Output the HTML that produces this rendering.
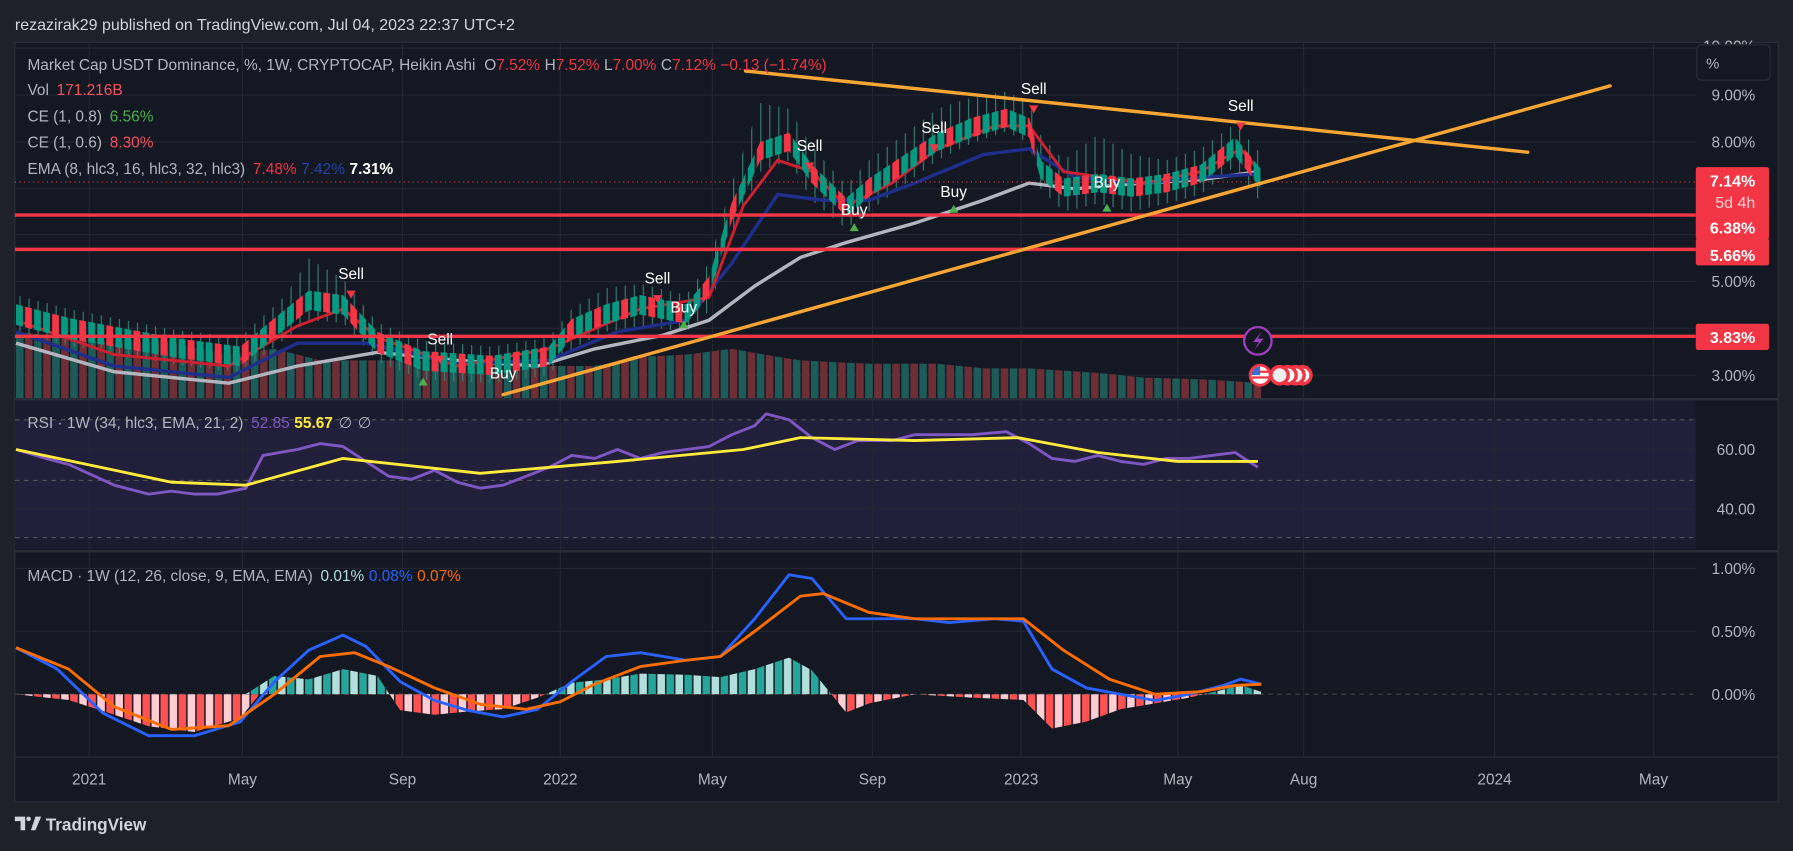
<!DOCTYPE html>
<html><head><meta charset="utf-8"><style>
html,body{margin:0;padding:0;background:#1e212a;width:1793px;height:851px;overflow:hidden}
svg{display:block}
text{font-family:"Liberation Sans",sans-serif}
</style></head><body>
<svg width="1793" height="851" viewBox="0 0 1568 744" xmlns="http://www.w3.org/2000/svg">
<defs>
<pattern id="volp" x="14" y="0" width="15.8" height="10" patternUnits="userSpaceOnUse">
<rect x="0" y="0" width="6.6" height="10" fill="#1d5b58"/><rect x="7.9" y="0" width="6.6" height="10" fill="#6e2e36"/>
</pattern>
<pattern id="cdlp" x="14" y="0" width="23.7" height="10" patternUnits="userSpaceOnUse">
<rect x="0" y="0" width="6" height="10" fill="#089981"/><rect x="7.9" y="0" width="6" height="10" fill="#f23645"/><rect x="15.8" y="0" width="6" height="10" fill="#089981"/>
</pattern>
<pattern id="wickp" x="17" y="0" width="7.9" height="10" patternUnits="userSpaceOnUse">
<rect x="0" y="0" width="1" height="10" fill="#3a7d72"/>
</pattern>
<pattern id="hpos" x="14" y="0" width="15.8" height="10" patternUnits="userSpaceOnUse">
<rect x="0" y="0" width="6.6" height="10" fill="#26a69a"/><rect x="7.9" y="0" width="6.6" height="10" fill="#b2dfdb"/>
</pattern>
<pattern id="hneg" x="14" y="0" width="15.8" height="10" patternUnits="userSpaceOnUse">
<rect x="0" y="0" width="6.6" height="10" fill="#ff5252"/><rect x="7.9" y="0" width="6.6" height="10" fill="#ffcdd2"/>
</pattern>
<clipPath id="above"><rect x="0" y="480" width="1500" height="127"/></clipPath>
<clipPath id="below"><rect x="0" y="607" width="1500" height="60"/></clipPath>
<clipPath id="mainc"><rect x="13" y="37" width="1470" height="311"/></clipPath>
</defs>
<rect width="1568" height="744" fill="#1e212a"/>
<rect x="13" y="37" width="1542" height="664" fill="#141823" stroke="#2a2e39"/>
<rect x="13" y="350" width="1470" height="130" fill="#1a1b2e"/>
<rect x="13" y="367" width="1470" height="103" fill="#221f3a"/>
<g stroke="#222632" stroke-width="1">
<line x1="78" y1="37" x2="78" y2="662"/><line x1="212" y1="37" x2="212" y2="662"/><line x1="352" y1="37" x2="352" y2="662"/><line x1="490" y1="37" x2="490" y2="662"/><line x1="623" y1="37" x2="623" y2="662"/><line x1="763" y1="37" x2="763" y2="662"/><line x1="893" y1="37" x2="893" y2="662"/><line x1="1030" y1="37" x2="1030" y2="662"/><line x1="1140" y1="37" x2="1140" y2="662"/><line x1="1307" y1="37" x2="1307" y2="662"/><line x1="1446" y1="37" x2="1446" y2="662"/>
<line x1="13" y1="42" x2="1483" y2="42"/><line x1="13" y1="83" x2="1483" y2="83"/><line x1="13" y1="124" x2="1483" y2="124"/><line x1="13" y1="165" x2="1483" y2="165"/><line x1="13" y1="205" x2="1483" y2="205"/><line x1="13" y1="246" x2="1483" y2="246"/><line x1="13" y1="287" x2="1483" y2="287"/><line x1="13" y1="328" x2="1483" y2="328"/><line x1="13" y1="393" x2="1483" y2="393"/><line x1="13" y1="445" x2="1483" y2="445"/><line x1="13" y1="497" x2="1483" y2="497"/><line x1="13" y1="552" x2="1483" y2="552"/>
</g>
<line x1="13" y1="349" x2="1555" y2="349" stroke="#2a2e39" stroke-width="2"/>
<line x1="13" y1="482" x2="1555" y2="482" stroke="#2a2e39" stroke-width="2"/>
<line x1="13" y1="662" x2="1555" y2="662" stroke="#2a2e39"/>
<line x1="13" y1="367" x2="1483" y2="367" stroke="#555" stroke-dasharray="4 4"/>
<line x1="13" y1="420" x2="1483" y2="420" stroke="#555" stroke-dasharray="4 4"/>
<line x1="13" y1="470" x2="1483" y2="470" stroke="#555" stroke-dasharray="4 4"/>
<line x1="13" y1="607" x2="1483" y2="607" stroke="#444" stroke-dasharray="4 4"/>

<!-- volume -->
<polygon fill="url(#volp)" points="14,348 14,290 60,295 100,300 140,298 200,310 240,305 280,315 350,315 400,318 450,320 520,320 560,312 600,310 640,305 680,312 700,315 760,318 820,318 860,322 900,322 960,326 1000,330 1060,332 1103,335 1103,348"/>

<g clip-path="url(#mainc)">
<!-- wicks -->
<polygon fill="url(#wickp)" points="14,258 60,270 150,288 210,295 250,258 270,226 300,244 330,282 370,298 430,303 480,295 500,270 530,252 560,248 600,258 620,230 640,160 665,90 690,95 710,128 740,162 760,140 790,118 820,95 850,85 880,80 900,90 910,118 930,140 960,118 990,135 1020,140 1050,130 1080,108 1103,135 1103,178 1080,145 1050,170 1020,178 990,185 960,178 930,185 910,165 900,125 880,115 850,125 820,140 790,162 760,185 740,200 710,175 690,140 665,150 640,205 620,272 600,290 560,285 530,290 500,305 480,328 430,335 370,332 330,316 300,282 270,280 250,296 210,326 150,318 60,302 14,290"/>
<!-- EMAs -->
<polyline fill="none" stroke="#b2b5be" stroke-width="3" points="14,300 100,325 200,335 260,320 330,308 400,315 470,320 520,305 580,293 620,280 660,250 700,225 740,212 800,195 860,175 900,160 940,165 1000,160 1050,157 1100,150"/>
<polyline fill="none" stroke="#1f2e8a" stroke-width="3" points="14,290 100,320 200,330 260,300 320,300 400,318 480,315 540,290 600,280 640,230 680,170 720,175 760,175 800,160 860,135 900,130 940,155 1000,160 1050,155 1100,152"/>
<polyline fill="none" stroke="#d01f2e" stroke-width="2.5" points="14,280 100,310 200,320 260,285 300,270 330,295 400,320 480,305 560,270 620,260 650,180 680,140 710,150 740,180 780,160 820,130 870,110 900,110 930,150 1000,160 1050,150 1085,130 1100,148"/>
<!-- candle bodies -->
<polygon fill="url(#cdlp)" points="14,266 60,278 150,295 210,303 250,270 270,254 300,258 330,290 370,307 430,311 480,303 500,279 530,266 560,258 600,266 620,242 640,177 665,124 690,116 710,144 740,173 760,156 790,136 820,116 850,103 880,95 900,103 910,140 930,156 960,152 990,156 1020,152 1050,144 1080,120 1103,148 1103,165 1080,136 1050,160 1020,168 990,172 960,168 930,172 910,156 900,120 880,111 850,120 820,132 790,152 760,172 740,189 710,160 690,132 665,140 640,193 620,258 600,283 560,275 530,283 500,295 480,320 430,328 370,324 330,308 300,275 270,271 250,287 210,320 150,312 60,296 14,284"/>
</g>

<!-- horizontal levels -->
<line x1="13" y1="159" x2="1483" y2="159" stroke="#f23645" stroke-dasharray="1 3"/>
<line x1="13" y1="188" x2="1483" y2="188" stroke="#f23645" stroke-width="3"/>
<line x1="13" y1="218" x2="1483" y2="218" stroke="#f23645" stroke-width="3"/>
<line x1="13" y1="294" x2="1483" y2="294" stroke="#f23645" stroke-width="3"/>
<!-- trendlines -->
<line x1="652" y1="62" x2="1336" y2="133" stroke="#f7a534" stroke-width="3" stroke-linecap="round"/>
<line x1="440" y1="345" x2="1408" y2="75" stroke="#f7a534" stroke-width="3" stroke-linecap="round"/>

<!-- signals -->
<g font-size="13.5" fill="#fff" text-anchor="middle">
<text x="307" y="244">Sell</text><text x="385" y="301">Sell</text><text x="575" y="248">Sell</text><text x="708" y="132">Sell</text><text x="817" y="116">Sell</text><text x="904" y="82">Sell</text><text x="1085" y="97">Sell</text>
<text x="747" y="188">Buy</text><text x="834" y="172">Buy</text><text x="598" y="273">Buy</text><text x="440" y="331">Buy</text><text x="968" y="164">Buy</text>
</g>
<g fill="#f23645">
<path d="M303 254h8l-4 7z"/><path d="M381 311h8l-4 7z"/><path d="M571 258h8l-4 7z"/><path d="M704 142h8l-4 7z"/><path d="M813 126h8l-4 7z"/><path d="M900 92h8l-4 7z"/><path d="M1081 107h8l-4 7z"/>
</g>
<g fill="#4caf50">
<path d="M743 202h8l-4 -7z"/><path d="M830 186h8l-4 -7z"/><path d="M594 287h8l-4 -7z"/><path d="M964 185h8l-4 -7z"/><path d="M366 337h8l-4 -7z"/>
</g>

<!-- icons -->
<circle cx="1100" cy="298" r="12" fill="#141823" stroke="#9c3fc0" stroke-width="2"/>
<path d="M1103 290 L1096 299 L1101 299 L1097 306 L1105 296 L1100 296 Z" fill="#9c3fc0"/>
<circle cx="1139" cy="328" r="9" fill="#f23645"/><circle cx="1139" cy="328" r="6" fill="#fff"/>
<circle cx="1133" cy="328" r="9" fill="#f23645"/><circle cx="1133" cy="328" r="6" fill="#eee"/>
<circle cx="1126" cy="328" r="9" fill="#f23645"/><circle cx="1126" cy="328" r="6" fill="#fff"/>
<circle cx="1119" cy="328" r="9" fill="#f23645"/><circle cx="1119" cy="328" r="6" fill="#eee"/>
<circle cx="1102" cy="328" r="10" fill="#f23645"/><circle cx="1102" cy="328" r="7.5" fill="#fff"/>
<rect x="1095" y="324" width="15" height="2" fill="#f23645"/><rect x="1095" y="329" width="15" height="2" fill="#f23645"/>
<path d="M1094.5 328 A7.5 7.5 0 0 1 1102 320.5 L1102 328 Z" fill="#3c6ecf"/>

<!-- RSI -->
<polyline fill="none" stroke="#7e57c2" stroke-width="2.5" stroke-linejoin="round" points="14,393 40,400.8 60,406 100,424.2 130,432 150,429.4 170,432 190,432 215,426.8 230,398.2 260,393 280,387.8 300,390.4 320,403.4 340,416.4 360,419 380,411.2 400,421.6 420,426.8 440,424.2 460,416.4 480,408.6 500,398.2 520,400.8 540,393 560,400.8 580,395.6 600,393 620,390.4 640,380 660,372.2 670,361.8 690,367 710,382.6 730,393 750,385.2 780,385.2 800,380 820,380 850,380 880,377.4 900,387.8 920,400.8 940,403.4 960,398.2 980,403.4 1000,406 1020,400.8 1040,400.8 1060,398.2 1080,395.6 1100,408.6"/>
<polyline fill="none" stroke="#ffeb3b" stroke-width="2.5" stroke-linejoin="round" points="14,393 150,421.6 215,424.2 300,400.8 420,413.8 540,403.4 650,393 700,382.6 800,385.2 890,382.6 960,395.6 1030,403.4 1100,403.4"/>

<!-- MACD histogram -->
<polygon clip-path="url(#above)" fill="url(#hpos)" points="14,607 14,607 60,612 100,620 130,623 170,617 210,610 240,591 270,594 300,585 330,591 350,621 380,623 410,620 440,620 470,610 500,597 530,594 560,589 600,590 630,592 660,585 690,575 710,586 740,623 760,615 800,607 850,610 895,610 920,639 950,631 980,620 1010,615 1040,610 1070,603 1085,599 1103,605 1103,607"/>
<polygon clip-path="url(#below)" fill="url(#hneg)" points="14,607 14,607 60,612 100,625 130,635 170,640 210,628 240,591 270,594 300,585 330,591 350,621 380,625 410,622 440,620 470,610 500,597 530,594 560,589 600,590 630,592 660,585 690,575 710,586 740,623 760,615 800,607 850,610 895,612 920,637 950,631 980,620 1010,615 1040,610 1070,603 1085,599 1103,605 1103,607"/>
<polyline fill="none" stroke="#2962ff" stroke-width="2.5" stroke-linejoin="round" points="14,566.3 50,585 90,623.5 130,643.3 170,643.3 210,631.2 240,596 270,568.5 300,555.3 320,565.2 350,596 380,612.5 410,621.3 440,626.8 470,620.2 500,596 530,574 560,570.7 600,577.3 630,574 660,541 690,502.5 710,505.8 740,541 760,541 800,541 830,544.3 870,541 895,543.2 920,585 950,601.5 980,607 1010,612.5 1040,607 1070,599.3 1085,593.8 1103,598.2"/>
<polyline fill="none" stroke="#ff6d00" stroke-width="2.5" stroke-linejoin="round" points="14,566.3 60,585 100,618 150,637.8 200,634.5 240,607 280,574 310,570.7 340,582.8 380,601.5 420,615.8 460,620.2 490,613.6 520,598.2 560,582.8 600,577.3 630,574 660,552 700,521.2 720,519 760,535.5 800,541 850,541 895,541 930,568.5 970,593.8 1010,607 1050,604.8 1080,599.3 1103,598.2"/>

<!-- legend -->
<text x="13" y="26" font-size="14" fill="#d1d4dc">rezazirak29 published on TradingView.com, Jul 04, 2023 22:37 UTC+2</text>
<g font-size="13.5" fill="#b2b5be">
<text x="24" y="61">Market Cap USDT Dominance, %, 1W, CRYPTOCAP, Heikin Ashi <tspan dx="4">O</tspan><tspan fill="#f23645">7.52%</tspan><tspan dx="4">H</tspan><tspan fill="#f23645">7.52%</tspan><tspan dx="4">L</tspan><tspan fill="#f23645">7.00%</tspan><tspan dx="4">C</tspan><tspan fill="#f23645">7.12%</tspan><tspan dx="4" fill="#f23645">−0.13 (−1.74%)</tspan></text>
<text x="24" y="83">Vol <tspan dx="3" fill="#f7525f">171.216B</tspan></text>
<text x="24" y="106">CE (1, 0.8) <tspan dx="3" fill="#4caf50">6.56%</tspan></text>
<text x="24" y="129">CE (1, 0.6) <tspan dx="3" fill="#f7525f">8.30%</tspan></text>
<text x="24" y="152">EMA (8, hlc3, 16, hlc3, 32, hlc3) <tspan dx="3" fill="#f23645">7.48%</tspan><tspan dx="4" fill="#2841a8">7.42%</tspan><tspan dx="4" fill="#fff" font-weight="bold">7.31%</tspan></text>
<text x="24" y="374">RSI · 1W (34, hlc3, EMA, 21, 2) <tspan dx="3" fill="#7e57c2">52.85</tspan><tspan dx="4" fill="#ffeb3b" font-weight="bold">55.67</tspan><tspan dx="5">∅</tspan><tspan dx="5">∅</tspan></text>
<text x="24" y="508">MACD · 1W (12, 26, close, 9, EMA, EMA) <tspan dx="3" fill="#b2dfdb">0.01%</tspan><tspan dx="4" fill="#2962ff">0.08%</tspan><tspan dx="4" fill="#ff6d00">0.07%</tspan></text>
</g>
<!-- right axis -->
<text x="1535" y="45" font-size="13.5" fill="#b2b5be" text-anchor="end">10.00%</text>
<rect x="1484" y="39" width="64" height="31" rx="4" fill="#141823" stroke="#2a2e39"/>
<text x="1492" y="60" font-size="13" fill="#b2b5be">%</text>
<g font-size="13.5" fill="#b2b5be" text-anchor="end">
<text x="1535" y="88">9.00%</text><text x="1535" y="129">8.00%</text><text x="1535" y="251">5.00%</text><text x="1535" y="333">3.00%</text>
<text x="1535" y="398">60.00</text><text x="1535" y="450">40.00</text>
<text x="1535" y="502">1.00%</text><text x="1535" y="557">0.50%</text><text x="1535" y="612">0.00%</text>
</g>
<rect x="1483" y="146" width="64" height="42" rx="2" fill="#f23645"/>
<rect x="1483" y="185" width="64" height="24" rx="2" fill="#f23645"/>
<rect x="1483" y="208" width="64" height="24" rx="2" fill="#f23645"/>
<rect x="1483" y="283" width="64" height="23" rx="2" fill="#f23645"/>
<g font-size="14" fill="#fff" text-anchor="end" font-weight="bold">
<text x="1535" y="163">7.14%</text><text x="1535" y="182" fill="#fbd0d3" font-weight="normal">5d 4h</text>
<text x="1535" y="204">6.38%</text><text x="1535" y="228">5.66%</text><text x="1535" y="300">3.83%</text>
</g>
<!-- time axis -->
<g font-size="13.5" fill="#b2b5be" text-anchor="middle">
<text x="78" y="686">2021</text><text x="212" y="686">May</text><text x="352" y="686">Sep</text><text x="490" y="686">2022</text><text x="623" y="686">May</text><text x="763" y="686">Sep</text><text x="893" y="686">2023</text><text x="1030" y="686">May</text><text x="1140" y="686">Aug</text><text x="1307" y="686">2024</text><text x="1446" y="686">May</text>
</g>
<!-- logo -->
<g fill="#d1d4dc">
<path d="M13 714 h9 v12 h-4 v-8 h-5 z"/><circle cx="25" cy="716" r="2"/><path d="M27 726 l4 -12 h5 l-5 12 z"/>
<text x="40" y="726" font-size="15" font-weight="bold">TradingView</text>
</g>
</svg>
</body></html>
